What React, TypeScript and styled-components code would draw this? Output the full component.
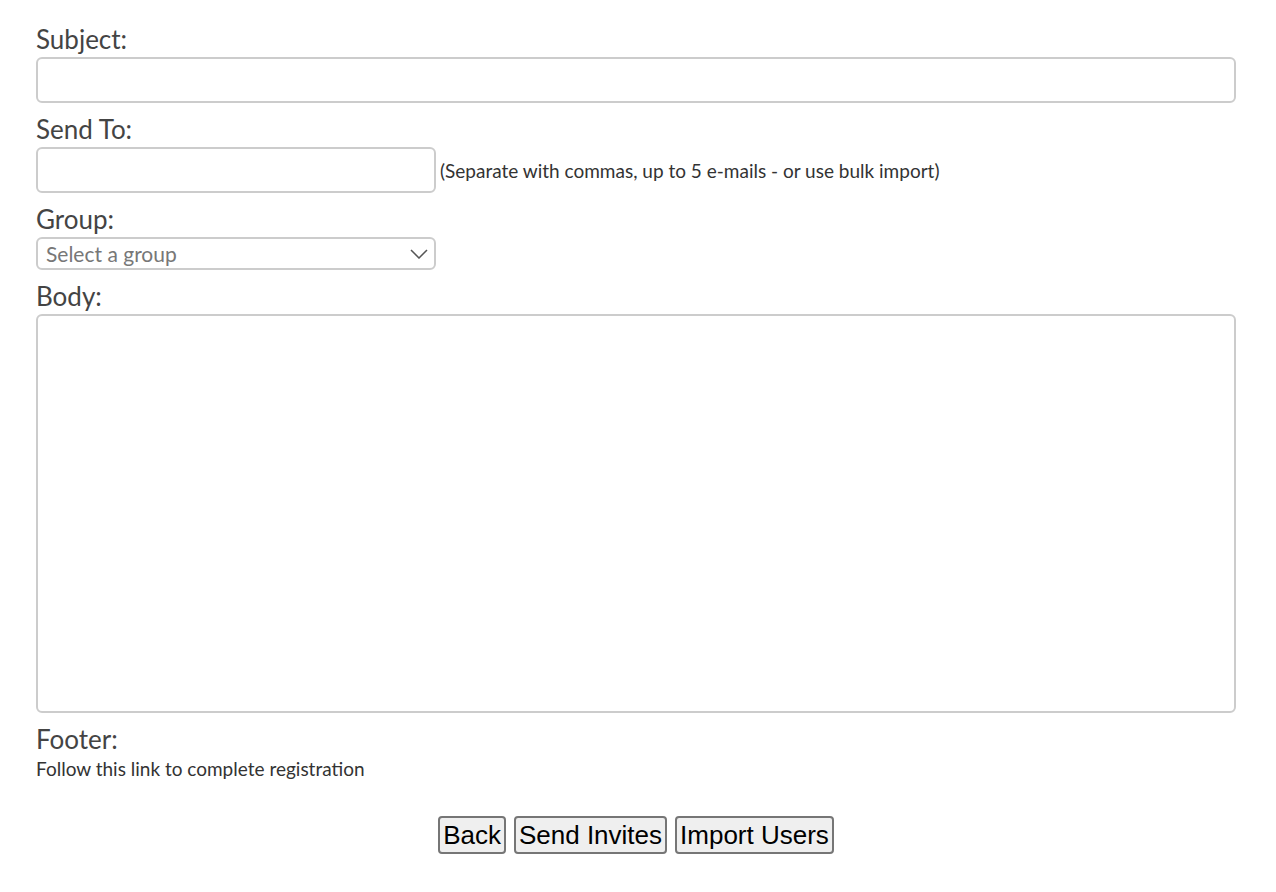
import React from "react";
import styled, { createGlobalStyle } from "styled-components";

const Global = createGlobalStyle`
  body { margin: 0; background: #fff; font-family: Lato, "Noto Sans", sans-serif; }
`;

const Page = styled.form`
  padding: 24px 40px 30px 36px;
  display: flex;
  flex-direction: column;
  width: 1200px;
`;

const Label = styled.label`
  font-size: 26px;
  line-height: 30px;
  color: #444;
  margin-bottom: 3px;
  display: block;
`;

const Field = styled.input<{ $w?: string }>`
  box-sizing: border-box;
  width: ${(p) => p.$w || "1200px"};
  height: 46px;
  border: 2px solid #ccc;
  border-radius: 6px;
  margin: 0;
`;

const Row = styled.div`
  display: flex;
  align-items: center;
  gap: 4px;
  margin-bottom: 11px;
`;

const Block = styled.div`
  margin-bottom: 11px;
  display: flex;
  flex-direction: column;
`;

const Hint = styled.span`
  font-size: 19px;
  color: #333;
`;

const SelectBox = styled.div`
  box-sizing: border-box;
  width: 400px;
  height: 33px;
  border: 2px solid #ccc;
  border-radius: 6px;
  display: flex;
  align-items: center;
  justify-content: space-between;
  padding: 0 6px 0 8px;
  font-size: 21px;
  color: #777;
`;

const Area = styled.textarea`
  box-sizing: border-box;
  width: 1200px;
  height: 399px;
  border: 2px solid #ccc;
  border-radius: 6px;
  resize: none;
  margin: 0;
`;

const FooterText = styled.div`
  font-size: 19px;
  line-height: 24px;
  color: #333;
`;

const Buttons = styled.div`
  display: flex;
  justify-content: center;
  gap: 8px;
  margin-top: 35px;
`;

const Btn = styled.button`
  font-family: "Liberation Sans", Arial, sans-serif;
  font-size: 26px;
  height: 38px;
  padding: 0 3px;
  background: #efefef;
  border: 2px solid #767676;
  border-radius: 4px;
  color: #000;
`;

export default function App() {
  return (
    <>
      <Global />
      <Page>
        <Label>Subject:</Label>
        <Block><Field /></Block>
        <Label>Send To:</Label>
        <Row>
          <Field $w="400px" />
          <Hint>(Separate with commas, up to 5 e-mails - or use bulk import)</Hint>
        </Row>
        <Label>Group:</Label>
        <Block>
          <SelectBox>
            <span>Select a group</span>
            <svg width="18" height="10" viewBox="0 0 18 10">
              <path d="M1 1l8 8 8-8" fill="none" stroke="#555" strokeWidth="1.5" />
            </svg>
          </SelectBox>
        </Block>
        <Label>Body:</Label>
        <Block><Area /></Block>
        <Label>Footer:</Label>
        <FooterText>Follow this link to complete registration</FooterText>
        <Buttons>
          <Btn type="button">Back</Btn>
          <Btn type="button">Send Invites</Btn>
          <Btn type="button">Import Users</Btn>
        </Buttons>
      </Page>
    </>
  );
}
